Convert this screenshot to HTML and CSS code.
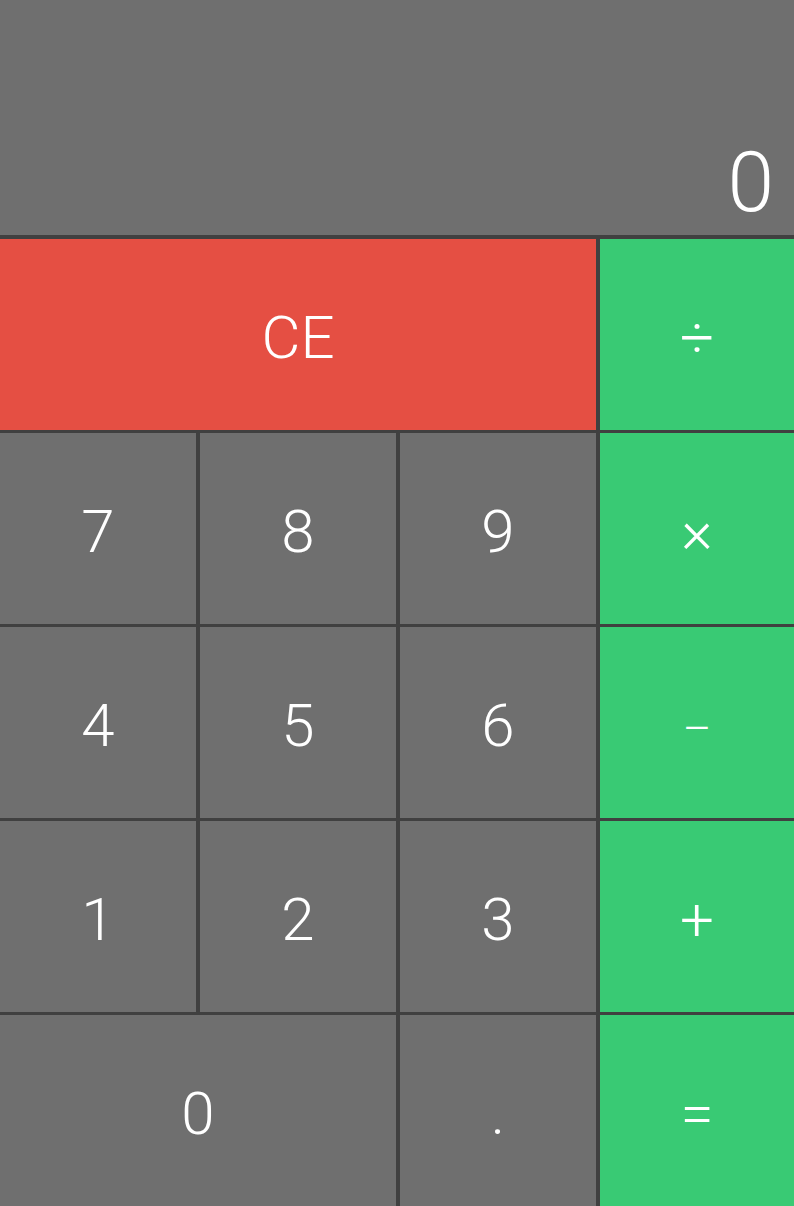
FILE: index.html
```html
<!DOCTYPE html>
<html lang="en">
<head>
<meta charset="utf-8">
<title>Calculator</title>
<link rel="stylesheet" href="styles.css">
</head>
<body>
<div class="calc">
  <div class="display"><span class="value">0</span></div>
  <div class="keys">
    <button class="key clear span3">CE</button>
    <button class="key op">÷</button>
    <button class="key">7</button>
    <button class="key">8</button>
    <button class="key">9</button>
    <button class="key op">×</button>
    <button class="key">4</button>
    <button class="key">5</button>
    <button class="key">6</button>
    <button class="key op minus">–</button>
    <button class="key">1</button>
    <button class="key">2</button>
    <button class="key">3</button>
    <button class="key op">+</button>
    <button class="key span2">0</button>
    <button class="key">.</button>
    <button class="key op">=</button>
  </div>
</div>
</body>
</html>
```

FILE: styles.css
```css
* { box-sizing: border-box; }
html, body {
  margin: 0;
  padding: 0;
  background: #404040;
}
body {
  width: 794px;
  height: 1206px;
  overflow: hidden;
  font-family: Roboto, "Liberation Sans", sans-serif;
  font-weight: 300;
}
.calc {
  display: flex;
  flex-direction: column;
  height: 1206px;
}
.display {
  height: 235px;
  margin-bottom: 4px;
  background: #6f6f6f;
  display: flex;
  align-items: flex-end;
  justify-content: flex-end;
  padding: 0 20px 10px 0;
  color: #fff;
}
.value {
  font-size: 84px;
  line-height: 1;
}
.keys {
  display: grid;
  grid-template-columns: 196px 196px 196px 1fr;
  grid-auto-rows: 191px;
  column-gap: 4px;
  row-gap: 3px;
}
.key {
  border: 0;
  margin: 0;
  padding: 6px 0 0 0;
  background: #6f6f6f;
  color: #fff;
  font-family: inherit;
  font-weight: 300;
  font-size: 60px;
  display: flex;
  align-items: center;
  justify-content: center;
  line-height: 1;
}
.minus {
  font-size: 44px;
  padding-top: 12px;
}
.span3 { grid-column: span 3; }
.span2 { grid-column: span 2; }
.clear { background: #e54f43; }
.op { background: #39ca74; }
```
